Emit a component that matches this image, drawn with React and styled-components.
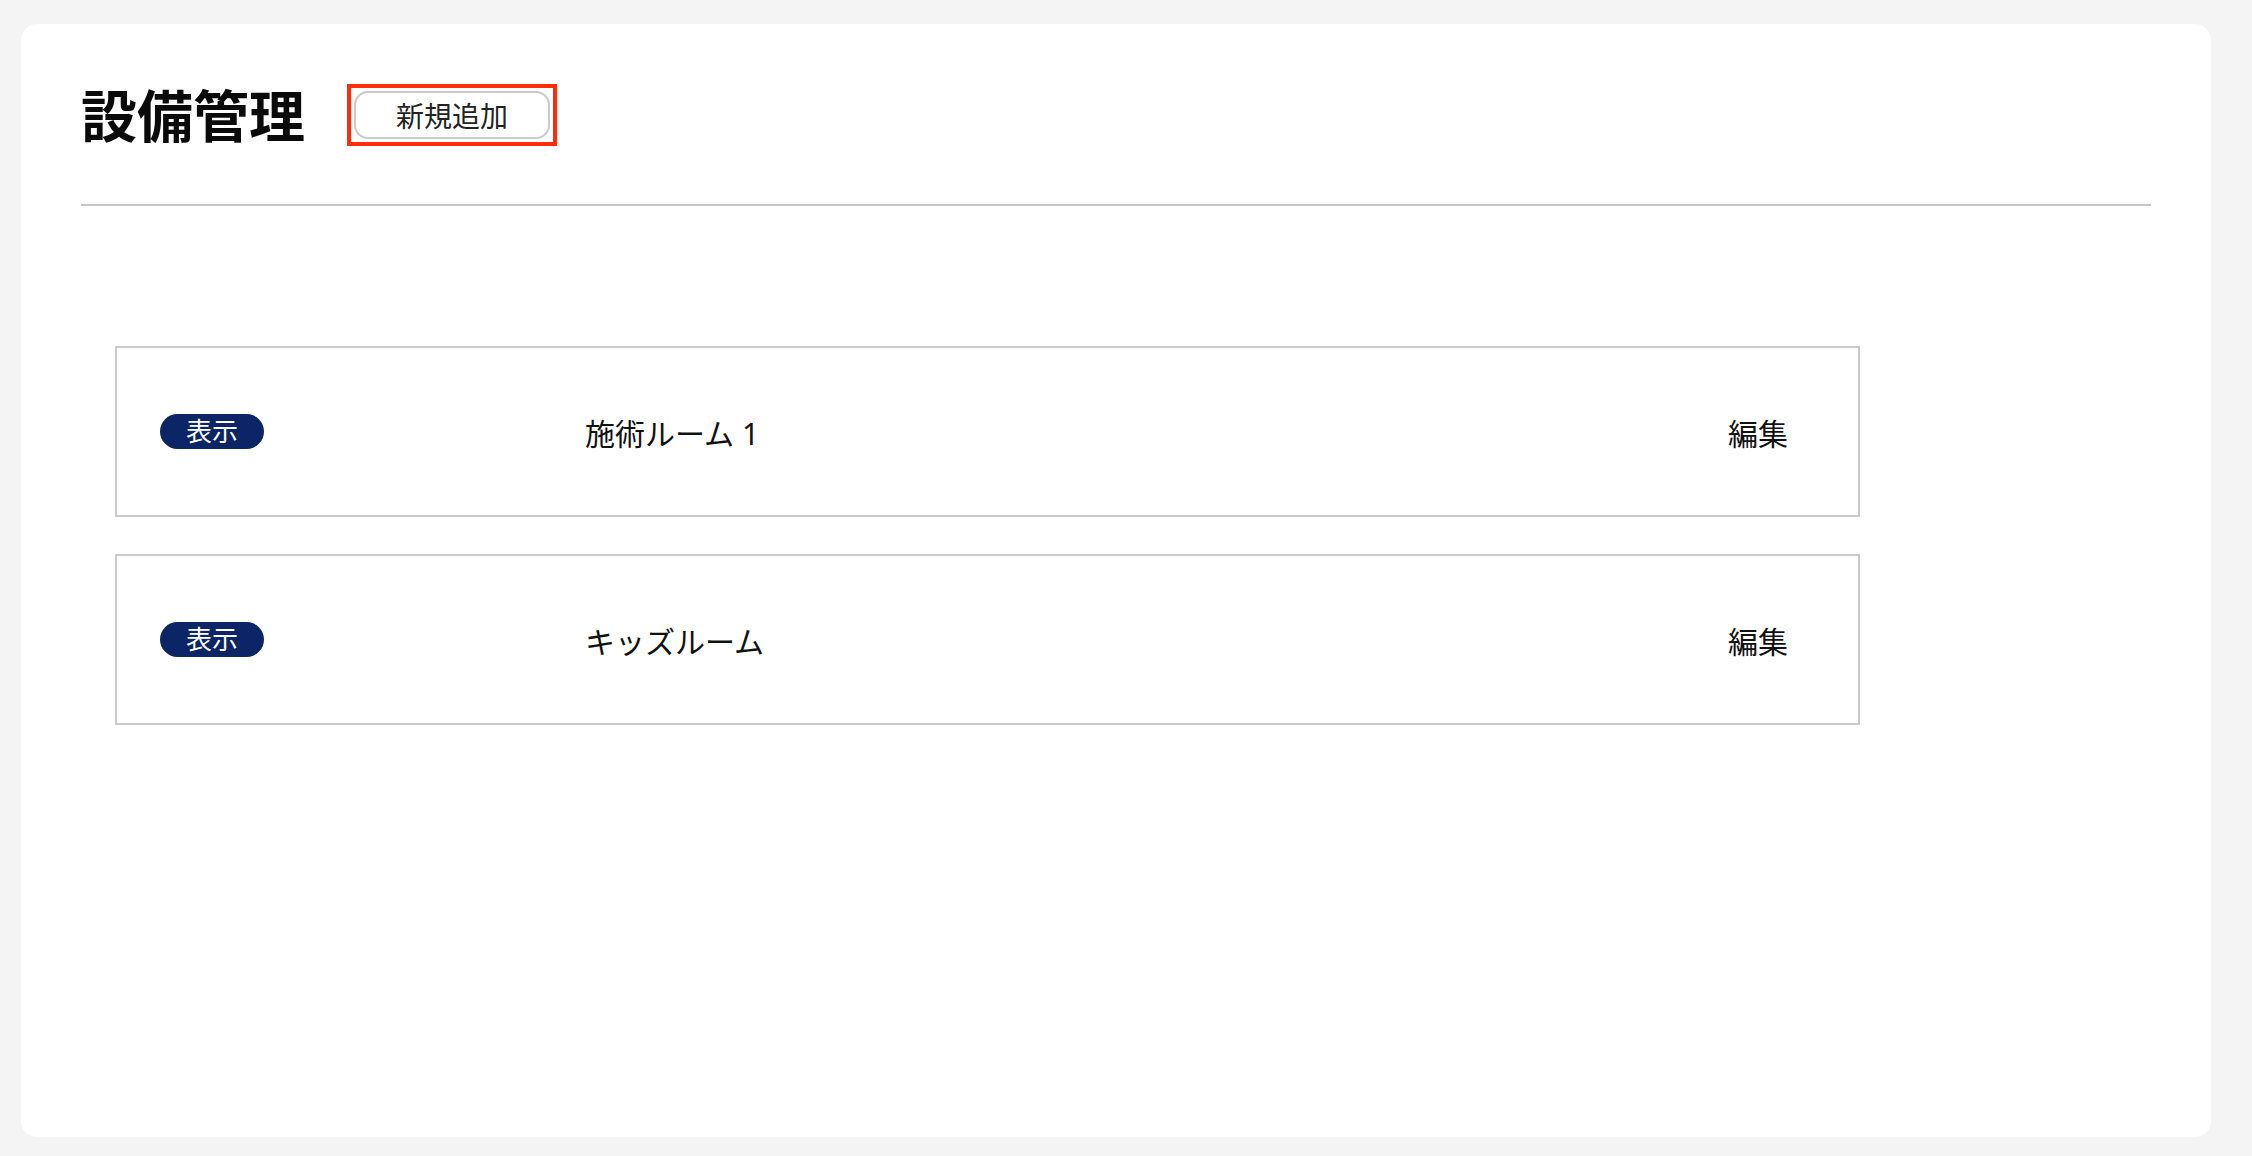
import React from "react";
import styled, { createGlobalStyle } from "styled-components";

const GlobalStyle = createGlobalStyle`
  html, body {
    margin: 0;
    padding: 0;
    background: #f4f4f4;
    font-family: "Noto Sans", "Noto Sans CJK JP", sans-serif;
    color: #111;
  }
`;

const Page = styled.div`
  padding: 24px 41px 19px 21px;
`;

const Card = styled.div`
  background: #fff;
  border-radius: 16px;
  height: 1113px;
  box-sizing: border-box;
  padding: 60px;
`;

const Header = styled.div`
  display: flex;
  align-items: center;
  gap: 42px;
  padding-bottom: 58px;
  border-bottom: 2px solid #c8c8c8;
`;

const Title = styled.h1`
  margin: 0;
  font-size: 56px;
  font-weight: 700;
  line-height: 60px;
  color: #0a0a0a;
`;

const Highlight = styled.div`
  border: 4px solid #ff2e0a;
  padding: 3px;
  display: flex;
`;

const AddButton = styled.button`
  width: 196px;
  height: 48px;
  border: 2px solid #c9c9cf;
  border-radius: 14px;
  background: #fff;
  font-family: inherit;
  font-size: 28px;
  color: #222;
  padding: 0;
  cursor: pointer;
`;

const List = styled.div`
  display: flex;
  flex-direction: column;
  gap: 37px;
  margin: 140px 0 0 34px;
  width: 1745px;
`;

const Row = styled.div`
  display: flex;
  align-items: center;
  height: 171px;
  box-sizing: border-box;
  border: 2px solid #cacad0;
  padding: 0 70px 0 43px;
`;

const BadgeCell = styled.div`
  width: 425px;
  flex-shrink: 0;
`;

const Badge = styled.span`
  display: inline-block;
  width: 104px;
  height: 35px;
  line-height: 35px;
  border-radius: 18px;
  background: ${(p) => (p.$off ? "#9a9aa4" : "#0b2566")};
  color: #fff;
  font-size: 26px;
  text-align: center;
`;

const Name = styled.div`
  flex: 1;
  font-size: 30px;
  color: #111;
`;

const Edit = styled.a`
  font-size: 30px;
  color: #111;
  cursor: pointer;
`;

const rooms = [
  { name: "施術ルーム 1", visible: true },
  { name: "キッズルーム", visible: true }
];

function RoomRow({ name, visible }) {
  return (
    <Row>
      <BadgeCell>
        <Badge $off={!visible}>{visible ? "表示" : "非表示"}</Badge>
      </BadgeCell>
      <Name>{name}</Name>
      <Edit>編集</Edit>
    </Row>
  );
}

export default function App() {
  return (
    <Page>
      <GlobalStyle />
      <Card>
        <Header>
          <Title>設備管理</Title>
          <Highlight>
            <AddButton>新規追加</AddButton>
          </Highlight>
        </Header>
        <List>
          {rooms.map((room, key) => (
            <RoomRow key={key} name={room.name} visible={room.visible} />
          ))}
        </List>
      </Card>
    </Page>
  );
}
